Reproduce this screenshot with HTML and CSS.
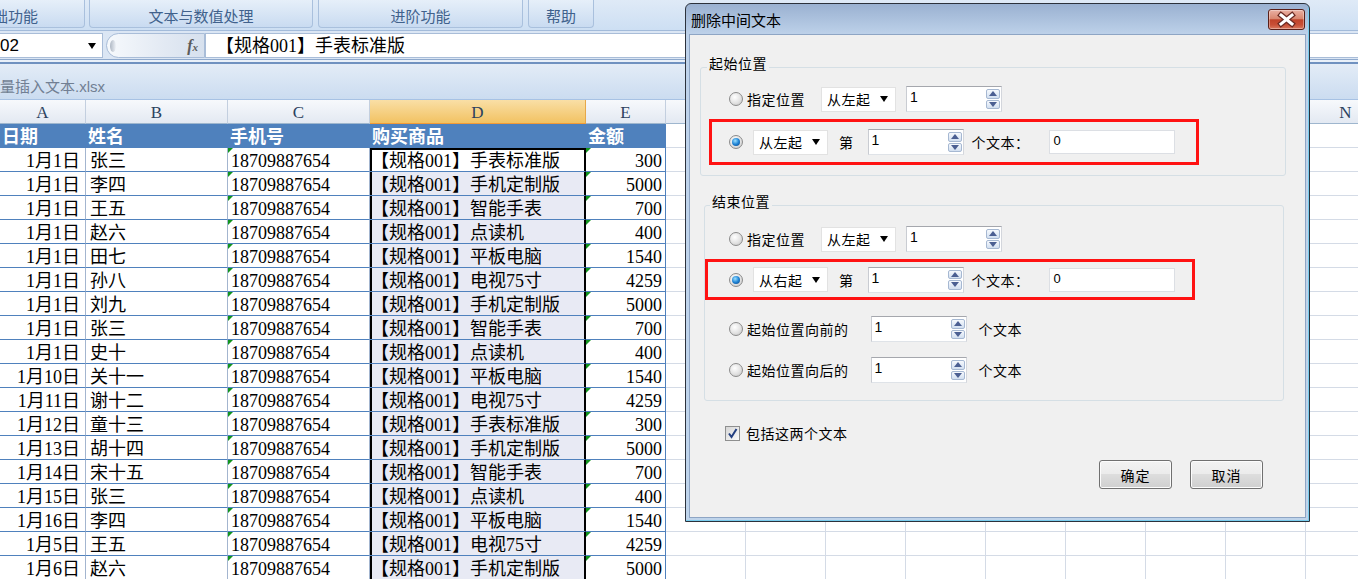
FILE: index.html
```html
<!DOCTYPE html>
<html lang="zh-CN">
<head>
    <meta charset="UTF-8">
    <meta name="viewport" content="width=device-width, initial-scale=1.0">
    <title>删除中间文本</title>
    <link rel="stylesheet" href="styles.css">
</head>
<body>
    <div class="ribbon">
        <div class="tab tab-basic">基础功能</div>
        <div class="tab tab-text">文本与数值处理</div>
        <div class="tab tab-adv">进阶功能</div>
        <div class="tab tab-help">帮助</div>
    </div>

    <div class="formula">
        <div class="namebox"><span>02</span><i class="arrow"></i></div>
        <div class="fxbox"><i class="knob"></i><span class="fx">f<small>x</small></span></div>
        <div class="input">【规格001】手表标准版</div>
    </div>
    <div class="formula-edge"></div>

    <div class="bookbar">量插入文本.xlsx</div>

    <div class="sheet" id="sheet">
        <!-- F to M sit under the dialog, so they stay empty -->
        <div class="colhead">
            <div>A</div><div>B</div><div>C</div><div class="cur">D</div><div>E</div>
            <div></div><div></div><div></div><div></div><div></div>
            <div></div><div></div><div></div><div>N</div>
        </div>
        <div class="row head">
            <div>日期</div>
            <div>姓名</div>
            <div>手机号</div>
            <div>购买商品</div>
            <div>金额</div>
            <div class="rest"></div>
        </div>
    </div>

    <!-- dialog window over the sheet -->
    <div class="dialog">
        <div class="dlg-title">
            <span>删除中间文本</span>
            <button class="dlg-close">
                <svg width="35" height="19" viewBox="0 0 35 19">
                    <path d="M12 5 L23 14 M23 5 L12 14" stroke="#6b2b24" stroke-width="5.5" stroke-linecap="square"/>
                    <path d="M12 5 L23 14 M23 5 L12 14" stroke="#fff" stroke-width="3" stroke-linecap="square"/>
                </svg>
            </button>
        </div>
        <div class="dlg-body">
            <fieldset class="group g1">
                <legend>起始位置</legend>
                <div class="opt">
                    <span class="radio"></span>
                    <span class="lbl">指定位置</span>
                    <span class="combo c1">从左起</span>
                    <span class="spin s1"><span class="val">1</span><span class="spin-btns"><i class="up"></i><i class="down"></i></span></span>
                </div>
                <div class="opt hl hl1">
                    <span class="radio on"></span>
                    <span class="combo c2">从左起</span>
                    <span class="lbl nth">第</span>
                    <span class="spin s2"><span class="val">1</span><span class="spin-btns"><i class="up"></i><i class="down"></i></span></span>
                    <span class="lbl cnt">个文本：</span>
                    <span class="textbox">0</span>
                </div>
            </fieldset>

            <fieldset class="group g2">
                <legend>结束位置</legend>
                <div class="opt">
                    <span class="radio"></span>
                    <span class="lbl">指定位置</span>
                    <span class="combo c1">从左起</span>
                    <span class="spin s1"><span class="val">1</span><span class="spin-btns"><i class="up"></i><i class="down"></i></span></span>
                </div>
                <div class="opt hl hl2">
                    <span class="radio on"></span>
                    <span class="combo c2">从右起</span>
                    <span class="lbl nth">第</span>
                    <span class="spin s2"><span class="val">1</span><span class="spin-btns"><i class="up"></i><i class="down"></i></span></span>
                    <span class="lbl cnt">个文本：</span>
                    <span class="textbox">0</span>
                </div>
                <div class="opt rel r3">
                    <span class="radio"></span>
                    <span class="lbl">起始位置向前的</span>
                    <span class="spin s3"><span class="val">1</span><span class="spin-btns"><i class="up"></i><i class="down"></i></span></span>
                    <span class="lbl tail">个文本</span>
                </div>
                <div class="opt rel r4">
                    <span class="radio"></span>
                    <span class="lbl">起始位置向后的</span>
                    <span class="spin s3"><span class="val">1</span><span class="spin-btns"><i class="up"></i><i class="down"></i></span></span>
                    <span class="lbl tail">个文本</span>
                </div>
            </fieldset>

            <div class="check-row">
                <span class="checkbox">
                    <svg width="13" height="13" viewBox="0 0 13 13"><path d="M3 6.5 L5.5 10 L10.5 2" fill="none" stroke="#233f80" stroke-width="2"/></svg>
                </span>
                <span class="lbl">包括这两个文本</span>
            </div>

            <div class="btn-row">
                <button class="btn">确定</button>
                <button class="btn">取消</button>
            </div>
        </div>
    </div>

    <script>
        // Orders shown in the sheet: date, name, product, amount
        const orders = [
            ['1月1日', '张三', '手表标准版', 300],
            ['1月1日', '李四', '手机定制版', 5000],
            ['1月1日', '王五', '智能手表', 700],
            ['1月1日', '赵六', '点读机', 400],
            ['1月1日', '田七', '平板电脑', 1540],
            ['1月1日', '孙八', '电视75寸', 4259],
            ['1月1日', '刘九', '手机定制版', 5000],
            ['1月1日', '张三', '智能手表', 700],
            ['1月1日', '史十', '点读机', 400],
            ['1月10日', '关十一', '平板电脑', 1540],
            ['1月11日', '谢十二', '电视75寸', 4259],
            ['1月12日', '童十三', '手表标准版', 300],
            ['1月13日', '胡十四', '手机定制版', 5000],
            ['1月14日', '宋十五', '智能手表', 700],
            ['1月15日', '张三', '点读机', 400],
            ['1月16日', '李四', '平板电脑', 1540],
            ['1月5日', '王五', '电视75寸', 4259],
            ['1月6日', '赵六', '手机定制版', 5000]
        ];

        function cell(className, text) {
            const div = document.createElement('div');
            div.className = className;
            div.textContent = text;
            return div;
        }

        const sheet = document.getElementById('sheet');
        orders.forEach((order, index) => {
            const row = document.createElement('div');
            row.className = 'row';
            row.appendChild(cell('c-date', order[0]));
            row.appendChild(cell('c-name', order[1]));
            row.appendChild(cell('c-phone mark', '18709887654'));
            row.appendChild(cell(index === 0 ? 'c-goods active' : 'c-goods', '【规格001】' + order[2]));
            row.appendChild(cell('c-amount mark', order[3]));
            row.appendChild(cell('rest', ''));
            sheet.appendChild(row);
        });
    </script>
</body>
</html>
```

FILE: styles.css
```css
* {
    box-sizing: border-box;
}

body {
    margin: 0;
    width: 1358px;
    height: 579px;
    overflow: hidden;
    position: relative;
    background-color: #fff;
    font-family: "Liberation Serif", "Noto Sans CJK SC", serif;
}

/* ribbon tabs */
.ribbon {
    height: 31px;
    display: flex;
    background: linear-gradient(#dfeaf7, #cddff3);
    border-bottom: 1px solid #a3bbda;
}

.tab {
    height: 28px;
    padding-top: 6px;
    line-height: 20px;
    text-align: center;
    font-family: "Noto Sans CJK SC", sans-serif;
    font-size: 15px;
    color: #40618c;
    background: linear-gradient(#e6eff9, #c9dbf1);
    border: 1px solid #a9c0dd;
    border-top: none;
    border-radius: 0 0 4px 4px;
}

.tab-basic { margin-left: -69px; width: 154px; }
.tab-text { margin-left: 4px; width: 224px; }
.tab-adv { margin-left: 5px; width: 205px; }
.tab-help { margin-left: 5px; width: 66px; }

/* formula bar */
.formula {
    height: 28px;
    display: flex;
    padding: 2px 0 1px;
    background-color: #dbe6f4;
}

.namebox {
    width: 103px;
    display: flex;
    align-items: center;
    justify-content: space-between;
    padding-right: 6px;
    background-color: #fff;
    border: 1px solid #a9bdd8;
    border-left: none;
    font-family: "Liberation Sans", sans-serif;
    font-size: 17px;
}

.arrow {
    border-top: 6px solid #000;
    border-left: 4px solid transparent;
    border-right: 4px solid transparent;
}

.fxbox {
    width: 99px;
    margin-left: 3px;
    display: flex;
    align-items: center;
    justify-content: space-between;
    padding: 0 6px 0 3px;
    background: linear-gradient(90deg, #f6f9fc, #e2e9f3 60%, #d7e1ee);
    border: 1px solid #a9bdd8;
    border-radius: 13px 0 0 13px;
}

.knob {
    width: 6px;
    height: 12px;
    border-radius: 50%;
    background: linear-gradient(90deg, #aeb7c3, #eef2f7);
}

.fx {
    font-family: "Liberation Serif", serif;
    font-style: italic;
    font-weight: bold;
    font-size: 16px;
    color: #5b5b5b;
}

.fx small {
    font-size: 11px;
}

.input {
    flex: 1;
    padding-left: 10px;
    line-height: 25px;
    font-size: 18px;
    background-color: #fff;
    border: 1px solid #a9bdd8;
    border-right: none;
}

.formula-edge {
    height: 5px;
    background: linear-gradient(#8ea9cd 0 1px, #e9f0f9 1px 3px, #6f91c0 3px 5px);
}

/* workbook caption */
.bookbar {
    height: 36px;
    padding-top: 13px;
    line-height: 20px;
    font-family: "Liberation Sans", "Noto Sans CJK SC", sans-serif;
    font-size: 15px;
    color: #717f93;
    background: linear-gradient(#e3ecf7, #cbdcf0);
    border-bottom: 1px solid #a7c2e4;
}

/* sheet grid */
.sheet {
    overflow: hidden;
}

.colhead {
    display: grid;
    grid-template-columns: 86px 142px 142px 216px repeat(10, 80px);
    height: 24px;
}

.colhead div {
    padding-top: 2px;
    line-height: 21px;
    text-align: center;
    font-size: 17px;
    color: #2b425e;
    background: linear-gradient(#f7f9fc, #e3e9f2);
    border-right: 1px solid #c3cfdf;
    border-bottom: 1px solid #9eb6ce;
}

.colhead .cur {
    background: linear-gradient(#f9dfa6, #f2c262);
    border-right-color: #e6a84a;
    border-bottom-color: #f29b36;
}

.row {
    display: grid;
    grid-template-columns: 86px 142px 142px 216px 80px 1fr;
    height: 24px;
}

.row > div {
    position: relative;
    padding-top: 3px;
    line-height: 20px;
    font-size: 18px;
    white-space: nowrap;
    overflow: hidden;
    border-right: 1px solid #a3b5cf;
    border-bottom: 1px solid #4f81bd;
}

.row > .rest {
    border-right: none;
    border-bottom-color: #d4dbe6;
    background: repeating-linear-gradient(90deg, transparent 0 79px, #d4dbe6 79px 80px);
}

.head > div {
    padding-left: 2px;
    font-weight: bold;
    color: #fff;
    background-color: #4f81bd;
    border-right-color: #4f81bd;
}

.head > .rest {
    background-color: #fff;
}

.c-date {
    text-align: right;
    padding-right: 5px;
}

.c-name {
    padding-left: 4px;
}

.c-phone {
    padding-left: 3px;
}

.c-goods {
    padding-left: 1px;
    background-color: #e8eaf4;
    border-right-color: #000 !important;
    box-shadow: inset 2px 0 0 #000, inset -1px 0 0 #000;
}

.c-goods.active {
    background-color: #fff;
    box-shadow: inset 2px 0 0 #000, inset -1px 0 0 #000, inset 0 2px 0 #000;
}

.c-amount {
    text-align: right;
    padding-right: 3px;
    border-right-color: #4f81bd !important;
}

/* green "number stored as text" corner */
.mark::before {
    content: "";
    position: absolute;
    left: 0;
    top: 0;
    border-top: 5px solid #12951f;
    border-right: 5px solid transparent;
}

/* dialog */
.dialog {
    position: absolute;
    left: 685px;
    top: 3px;
    width: 625px;
    height: 519px;
    padding: 0 3px 3px;
    border: 1px solid #2c323c;
    border-radius: 6px 6px 0 0;
    background: linear-gradient(#9ab1d1, #bed2ea 31px, #bfd4eb);
    box-shadow: inset -1px -1px 0 #79cdee;
    font-family: "Noto Sans CJK SC", sans-serif;
    font-size: 14px;
}

.dlg-title {
    height: 30px;
    display: flex;
    justify-content: space-between;
    align-items: flex-start;
    padding-left: 2px;
    line-height: 31px;
    font-size: 15px;
    color: #000;
}

.dlg-close {
    width: 37px;
    height: 21px;
    margin-top: 5px;
    margin-right: 1px;
    padding: 0;
    display: flex;
    align-items: center;
    justify-content: center;
    border: 1px solid #5a1f18;
    border-radius: 3px;
    background: linear-gradient(#eab0a3, #d98770 45%, #c0432a 52%, #c84f36 78%, #d97a60);
    box-shadow: inset 0 0 0 1px rgba(255, 255, 255, 0.35);
}

.dlg-body {
    height: 484px;
    background-color: #f0f0f0;
    border: 1px solid #8ea5c4;
}

.group {
    margin: 0;
    padding: 0;
    border: 1px solid #d5dfe5;
    border-radius: 3px;
}

.group legend {
    padding: 0 2px 8px;
    line-height: 18px;
    letter-spacing: 0.5px;
}

.g1 {
    width: 586px;
    margin: 19px 0 0 10px;
    padding: 6px 0 10px;
}

.g1 legend {
    margin-left: 6px;
}

.g2 {
    width: 580px;
    margin: 16px 0 0 14px;
    padding: 8px 0 17px;
}

.g2 legend {
    margin-left: 5px;
}

.opt {
    height: 26px;
    display: flex;
    align-items: center;
    padding-left: 28px;
    line-height: 18px;
}

.g2 .opt {
    padding-left: 24px;
}

.opt.hl {
    width: 490px;
    margin-top: 7px;
    border: 3px solid #ff1212;
}

.hl1 {
    height: 46px;
    margin-left: 8px;
    padding-left: 17px !important;
}

.hl2 {
    height: 41px;
    padding-left: 21px !important;
}

.r3 { margin-top: 16px; }
.r4 { margin-top: 15px; }

.lbl {
    letter-spacing: 0.5px;
    white-space: nowrap;
    line-height: 18px;
}

.opt .radio + .lbl { margin-left: 4px; }
.rel .spin { margin-left: 22px; }
.lbl.tail { margin-left: 12px; }
.lbl.nth { margin-left: 11px; }
.lbl.cnt { margin-left: 8px; width: 77px; }

.radio {
    width: 14px;
    height: 14px;
    flex: none;
    position: relative;
    border: 1px solid #8b8b8b;
    border-radius: 50%;
    background: radial-gradient(circle at 40% 35%, #fff, #e2e2e2 55%, #c2c2c2);
}

.radio.on::after {
    content: "";
    position: absolute;
    left: 2px;
    top: 2px;
    width: 8px;
    height: 8px;
    border-radius: 50%;
    background: radial-gradient(circle at 40% 35%, #9be0ff, #1f84d6 50%, #0b3f7c);
}

.combo {
    width: 75px;
    height: 25px;
    flex: none;
    display: flex;
    align-items: center;
    justify-content: space-between;
    padding: 0 7px 0 5px;
    letter-spacing: 0.5px;
    line-height: 18px;
    background-color: #fff;
    border: 1px solid #e2e2e2;
}

.combo::after {
    content: "";
    border-top: 6px solid #000;
    border-left: 4px solid transparent;
    border-right: 4px solid transparent;
}

.c1 { margin-left: 16px; }
.c2 { margin-left: 10px; }

.spin {
    width: 96px;
    height: 26px;
    flex: none;
    display: flex;
    padding: 2px 1px 2px 3px;
    background-color: #fff;
    border: 1px solid #abadb3;
    border-color: #a5a7ad #d3d6dc #dfe3e8 #c9ccd2;
}

.s1 { margin-left: 10px; }
.s2 { margin-left: 14px; }

.spin .val {
    flex: 1;
    font-family: "Liberation Sans", sans-serif;
    font-size: 14px;
    line-height: 16px;
}

.spin-btns {
    width: 14px;
    display: flex;
    flex-direction: column;
    gap: 1px;
}

.spin-btns i {
    flex: 1;
    display: flex;
    align-items: center;
    justify-content: center;
    border: 1px solid #a6b8d2;
    border-radius: 2px;
    background: linear-gradient(#f6f9fd, #d2dff0);
}

.spin-btns .up::after {
    content: "";
    border-bottom: 5px solid #4b5f92;
    border-left: 4px solid transparent;
    border-right: 4px solid transparent;
}

.spin-btns .down::after {
    content: "";
    border-top: 5px solid #4b5f92;
    border-left: 4px solid transparent;
    border-right: 4px solid transparent;
}

.textbox {
    width: 126px;
    height: 24px;
    flex: none;
    padding: 2px 4px;
    font-family: "Liberation Sans", sans-serif;
    font-size: 13px;
    line-height: 16px;
    background-color: #fff;
    border: 1px solid #dcdfe4;
}

.check-row {
    height: 18px;
    margin-top: 23px;
    padding-left: 35px;
    display: flex;
    align-items: center;
    gap: 6px;
}

.checkbox {
    width: 15px;
    height: 15px;
    display: flex;
    align-items: center;
    justify-content: center;
    border: 1px solid #8e8f8f;
    background: linear-gradient(135deg, #d6d6d6, #fbfbfb);
}

.btn-row {
    margin-top: 18px;
    padding-right: 42px;
    display: flex;
    justify-content: flex-end;
    gap: 18px;
}

.btn {
    width: 73px;
    height: 29px;
    padding: 0;
    font-family: "Noto Sans CJK SC", sans-serif;
    font-size: 14px;
    letter-spacing: 1px;
    color: #000;
    border: 1px solid #707070;
    border-radius: 3px;
    background: linear-gradient(#f2f2f2, #ebebeb 50%, #dddddd 50%, #cfcfcf);
    box-shadow: inset 0 0 0 1px #fcfcfc;
}
```
